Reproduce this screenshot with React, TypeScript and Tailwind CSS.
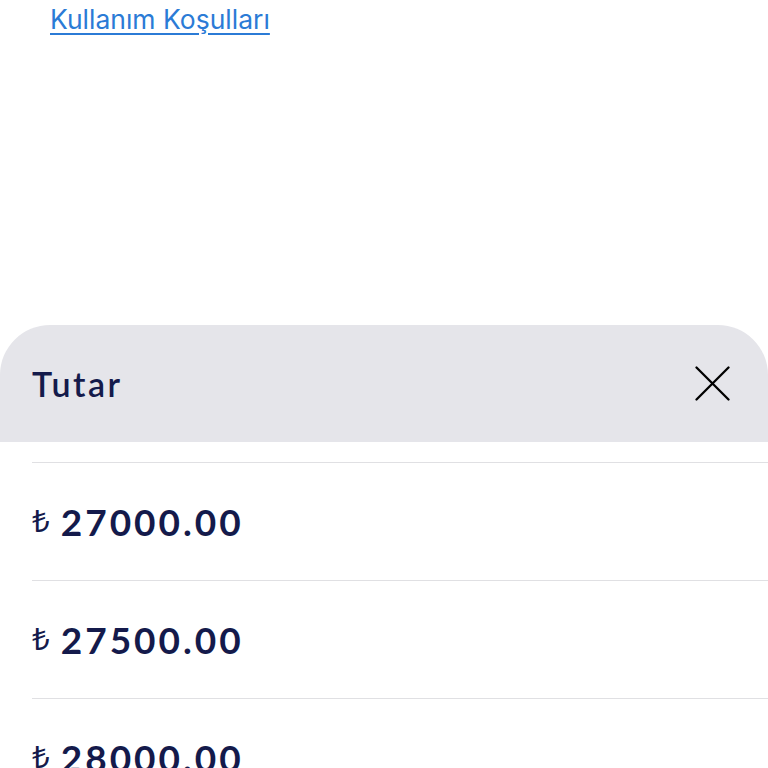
const amounts = ["27000.00", "27500.00", "28000.00"];

export default function App() {
  return (
    <div className="w-[768px] h-[768px] overflow-hidden bg-white flex flex-col font-['Noto_Sans',sans-serif]">
      <div className="h-[325px] shrink-0 pl-[50px] pt-[1px]">
        <a
          href="#"
          className="text-[26.5px] leading-[36px] text-[#2b7bd6] underline underline-offset-[4px] decoration-[2px] font-['Inter',sans-serif]"
        >
          Kullanım Koşulları
        </a>
      </div>

      <div className="shrink-0 flex flex-col">
        <div className="h-[117px] shrink-0 bg-[#e5e5ea] rounded-t-[50px] flex items-center justify-between pl-[32px] pr-[38px]">
          <span className="text-[34px] font-semibold text-[#141a4b] font-['Lato',sans-serif] tracking-[2.5px]">
            Tutar
          </span>
          <svg width="35" height="35" viewBox="0 0 35 35" fill="none">
            <path
              d="M1.5 1.5 L33.5 33.5 M33.5 1.5 L1.5 33.5"
              stroke="#000"
              strokeWidth="2.3"
              strokeLinecap="round"
            />
          </svg>
        </div>

        <div className="pl-[32px] pt-[20px]">
          {amounts.map((a) => (
            <div
              key={a}
              className="h-[118px] border-t border-[#e0e0e3] flex items-center gap-[11px]"
            >
              <span className="text-[31px] leading-none text-[#141a4b] font-['Noto_Sans',sans-serif] -mt-[2px]">
                ₺
              </span>
              <span className="text-[37px] font-bold text-[#141a4b] font-['Lato',sans-serif] tracking-[3px]">
                {a}
              </span>
            </div>
          ))}
        </div>
      </div>
    </div>
  );
}
